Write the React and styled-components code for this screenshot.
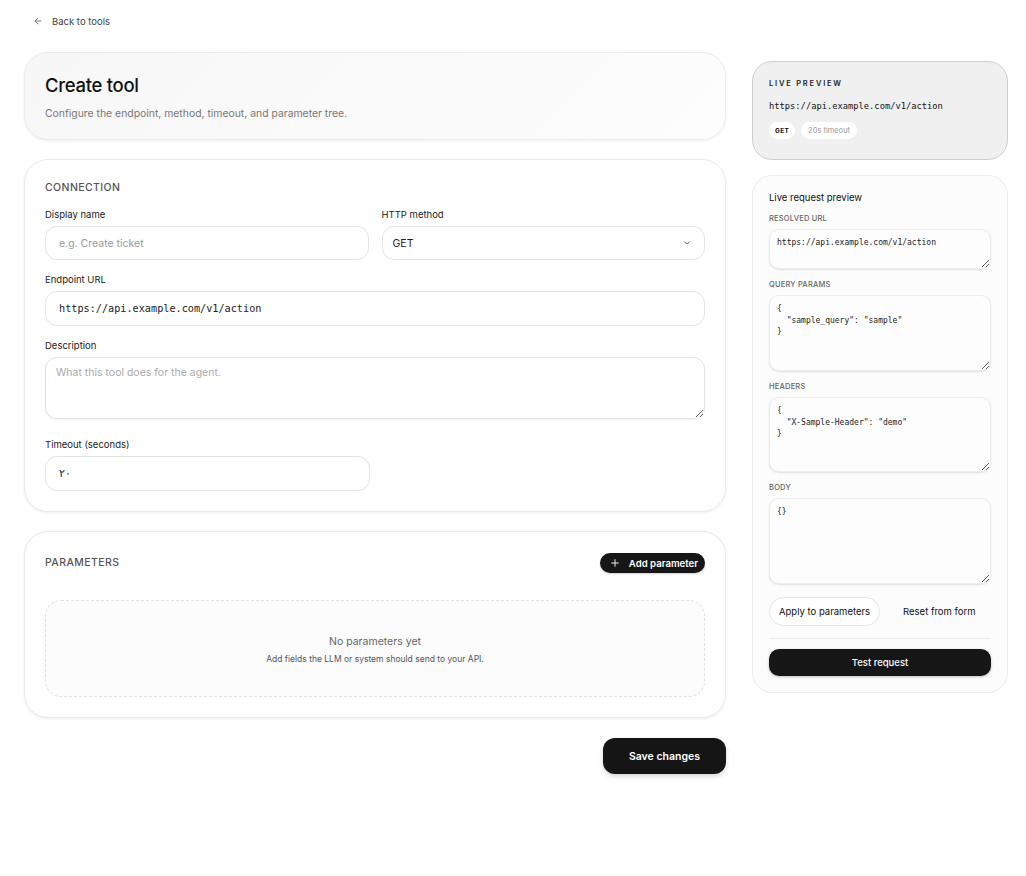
import React from "react";
import styled, { createGlobalStyle } from "styled-components";

const Global = createGlobalStyle`
  html, body { margin: 0; padding: 0; background: #ffffff; }
  body { font-family: Inter, "Noto Sans", "Liberation Sans", sans-serif; color: #111; }
  * { box-sizing: border-box; }
`;

const Page = styled.div`
  padding: 10px 18px 40px 24px;
  width: 1026px;
`;

const BackLink = styled.a`
  display: inline-flex;
  align-items: center;
  gap: 9px;
  margin-left: 9px;
  font-size: 9.5px;
  color: #444;
  text-decoration: none;
  height: 14px;
`;

const Layout = styled.div`
  display: grid;
  grid-template-columns: 702px 256px;
  column-gap: 26px;
  margin-top: 22px;
  align-items: start;
`;

const MainCol = styled.div`
  display: flex;
  flex-direction: column;
  gap: 19px;
`;

const SideCol = styled.div`
  display: flex;
  flex-direction: column;
  gap: 15px;
  padding-top: 9px;
`;

const Card = styled.section`
  background: #fff;
  border: 1px solid #ebebeb;
  border-radius: 24px;
  box-shadow: 0 1px 3px rgba(0,0,0,0.07);
  padding: ${(p) => p.$pad || "20px"};
`;

const HeaderCard = styled(Card)`
  background: linear-gradient(135deg, #f7f7f7, #fdfdfd);
  padding: 20px 20px 20px 20px;
  height: 88px;
`;

const Title = styled.h1`
  margin: 0;
  font-size: 18.5px;
  font-weight: 500;
  letter-spacing: -0.3px;
  color: #111;
  line-height: 24px;
`;

const Subtitle = styled.p`
  margin: 10px 0 0;
  font-size: 10.4px;
  color: #777;
`;

const SectionTitle = styled.h2`
  margin: 0;
  font-size: 10.5px;
  font-weight: 500;
  letter-spacing: 0.4px;
  color: #555;
  text-transform: uppercase;
  line-height: 14px;
`;

const FormGrid = styled.div`
  display: grid;
  grid-template-columns: 1fr 1fr;
  column-gap: 13px;
  row-gap: 14px;
  margin-top: 14px;
`;

const Field = styled.div`
  display: flex;
  flex-direction: column;
  gap: 5px;
  grid-column: ${(p) => (p.$full ? "1 / -1" : "auto")};
  margin-top: ${(p) => p.$mt || "0"};
`;

const Label = styled.label`
  font-size: 9.5px;
  color: #222;
  line-height: 12px;
`;

const Input = styled.input`
  height: ${(p) => p.$h || "34px"};
  border: 1px solid #e4e4e4;
  border-radius: 12px;
  padding: 0 13px;
  font-family: ${(p) => (p.$mono ? '"DejaVu Sans Mono", monospace' : "inherit")};
  font-size: ${(p) => (p.$mono ? "10.2px" : "10.5px")};
  color: #222;
  background: #fff;
  outline: none;
  &::placeholder { color: #999; }
`;

const SelectBox = styled.div`
  height: 34px;
  border: 1px solid #e4e4e4;
  border-radius: 12px;
  padding: 0 12px 0 10px;
  display: flex;
  align-items: center;
  justify-content: space-between;
  font-size: 10.5px;
  color: #222;
`;

const TextArea = styled.textarea`
  height: 62px;
  border: 1px solid #e4e4e4;
  border-radius: 12px;
  padding: 8px 10px;
  font-family: inherit;
  font-size: 10.5px;
  color: #222;
  resize: vertical;
  outline: none;
  box-shadow: 0 1px 2px rgba(0,0,0,0.06);
  &::placeholder { color: #aaa; }
`;

const Half = styled.div`
  width: 325px;
  display: flex;
  flex-direction: column;
`;

const ParamHeader = styled.div`
  display: flex;
  align-items: center;
  justify-content: space-between;
  height: 20px;
`;

const PillButton = styled.button`
  display: inline-flex;
  align-items: center;
  gap: 9px;
  height: 20px;
  padding: 0 7px 0 10px;
  background: #161616;
  color: #fff;
  border: none;
  border-radius: 999px;
  font-family: inherit;
  font-size: 9.6px;
  font-weight: 600;
  box-shadow: 0 1px 2px rgba(0,0,0,0.2);
`;

const EmptyBox = styled.div`
  margin-top: 27px;
  height: 97px;
  border: 1px dashed #e2e2e2;
  border-radius: 16px;
  background: #fcfcfc;
  display: flex;
  flex-direction: column;
  align-items: center;
  justify-content: center;
  gap: 6px;
  padding-top: 2px;
`;

const EmptyTitle = styled.div`
  font-size: 10.5px;
  color: #666;
`;

const EmptyText = styled.div`
  font-size: 8.5px;
  color: #555;
`;

const Footer = styled.div`
  display: flex;
  justify-content: flex-end;
  margin-top: 1px;
`;

const SaveButton = styled.button`
  height: 36px;
  padding: 0 26px;
  background: #151515;
  color: #fff;
  border: none;
  border-radius: 12px;
  font-family: inherit;
  font-size: 10.5px;
  font-weight: 600;
  box-shadow: 0 2px 5px rgba(0,0,0,0.18);
`;

const PreviewCard = styled.section`
  background: #f0f0f0;
  border: 1px solid #cfcfcf;
  border-radius: 20px;
  padding: 17px 16px 16px;
  height: 99px;
`;

const Eyebrow = styled.div`
  font-size: 7.5px;
  font-weight: 600;
  letter-spacing: 1.8px;
  color: #222;
  text-transform: uppercase;
  line-height: 10px;
`;

const MonoLine = styled.div`
  margin-top: 11px;
  font-family: "DejaVu Sans Mono", monospace;
  font-size: 8.75px;
  color: #111;
  line-height: 12px;
`;

const BadgeRow = styled.div`
  display: flex;
  gap: 6px;
  margin-top: 10px;
`;

const Badge = styled.span`
  display: inline-flex;
  align-items: center;
  height: 17px;
  padding: 0 ${(p) => (p.$strong ? "6px" : "7px")};
  background: #fff;
  border-radius: 999px;
  font-size: ${(p) => (p.$strong ? "6.5px" : "7.5px")};
  font-weight: ${(p) => (p.$strong ? 700 : 400)};
  color: ${(p) => (p.$strong ? "#111" : "#999")};
  letter-spacing: ${(p) => (p.$strong ? "0.3px" : "0")};
`;

const RequestCard = styled.section`
  background: #fcfcfc;
  border: 1px solid #ececec;
  border-radius: 20px;
  padding: 16px 16px 16px;
  display: flex;
  flex-direction: column;
`;

const CardHeading = styled.div`
  font-size: 9.5px;
  color: #111;
  line-height: 12px;
`;

const Block = styled.div`
  display: flex;
  flex-direction: column;
  gap: 5px;
  margin-top: ${(p) => p.$mt || "8px"};
`;

const SmallLabel = styled.div`
  font-size: 7.5px;
  font-weight: 500;
  color: #666;
  text-transform: uppercase;
  letter-spacing: 0.2px;
  line-height: 10px;
`;

const CodeArea = styled.textarea`
  height: ${(p) => p.$h};
  border: 1px solid #eeeeee;
  border-radius: 10px;
  background: #fdfdfd;
  padding: 7px 7px;
  font-family: "DejaVu Sans Mono", monospace;
  font-size: 8px;
  line-height: 11.5px;
  color: #222;
  resize: vertical;
  outline: none;
  box-shadow: 0 1px 2px rgba(0,0,0,0.12);
`;

const ActionRow = styled.div`
  display: flex;
  align-items: center;
  margin-top: 13px;
  padding-bottom: 12px;
  border-bottom: 1px solid #e8e8e8;
`;

const GhostButton = styled.button`
  height: 29px;
  padding: 0 ${(p) => (p.$bare ? "22px" : "9px")};
  border: 1px solid ${(p) => (p.$bare ? "transparent" : "#e6e6e6")};
  background: ${(p) => (p.$bare ? "transparent" : "#fff")};
  border-radius: 999px;
  font-family: inherit;
  font-size: 9.5px;
  color: #111;
  white-space: nowrap;
`;

const DarkButton = styled.button`
  margin-top: 10px;
  height: 27px;
  width: 100%;
  background: #161616;
  color: #fff;
  border: none;
  border-radius: 10px;
  font-family: inherit;
  font-size: 9.5px;
  font-weight: 500;
  box-shadow: 0 1px 3px rgba(0,0,0,0.25);
`;

const ArrowLeft = () => (
  <svg width="10" height="10" viewBox="0 0 24 24" fill="none" stroke="#555" strokeWidth="1.8" strokeLinecap="round" strokeLinejoin="round">
    <path d="M19 12H5" />
    <path d="M12 19l-7-7 7-7" />
  </svg>
);

const Chevron = () => (
  <svg width="10" height="10" viewBox="0 0 24 24" fill="none" stroke="#444" strokeWidth="2" strokeLinecap="round" strokeLinejoin="round">
    <path d="M6 9l6 6 6-6" />
  </svg>
);

const Plus = () => (
  <svg width="10" height="10" viewBox="0 0 24 24" fill="none" stroke="#fff" strokeWidth="2.2" strokeLinecap="round">
    <path d="M12 4v16M4 12h16" />
  </svg>
);

export default function App() {
  return (
    <Page>
      <Global />
      <BackLink href="#">
        <ArrowLeft />
        Back to tools
      </BackLink>
      <Layout>
        <MainCol>
          <HeaderCard>
            <Title>Create tool</Title>
            <Subtitle>Configure the endpoint, method, timeout, and parameter tree.</Subtitle>
          </HeaderCard>

          <Card $pad="21px 20px 20px">
            <SectionTitle>Connection</SectionTitle>
            <FormGrid>
              <Field>
                <Label>Display name</Label>
                <Input placeholder="e.g. Create ticket" />
              </Field>
              <Field>
                <Label>HTTP method</Label>
                <SelectBox>
                  <span>GET</span>
                  <Chevron />
                </SelectBox>
              </Field>
              <Field $full>
                <Label>Endpoint URL</Label>
                <Input $mono $h="35px" defaultValue="https://api.example.com/v1/action" />
              </Field>
              <Field $full>
                <Label>Description</Label>
                <TextArea placeholder="What this tool does for the agent." />
              </Field>
              <Field $full $mt="6px">
                <Label>Timeout (seconds)</Label>
                <Half>
                  <Input $h="35px" defaultValue="٢٠" />
                </Half>
              </Field>
            </FormGrid>
          </Card>

          <Card $pad="21px 20px 20px">
            <ParamHeader>
              <SectionTitle>Parameters</SectionTitle>
              <PillButton>
                <Plus />
                Add parameter
              </PillButton>
            </ParamHeader>
            <EmptyBox>
              <EmptyTitle>No parameters yet</EmptyTitle>
              <EmptyText>Add fields the LLM or system should send to your API.</EmptyText>
            </EmptyBox>
          </Card>

          <Footer>
            <SaveButton>Save changes</SaveButton>
          </Footer>
        </MainCol>

        <SideCol>
          <PreviewCard>
            <Eyebrow>Live preview</Eyebrow>
            <MonoLine>https://api.example.com/v1/action</MonoLine>
            <BadgeRow>
              <Badge $strong>GET</Badge>
              <Badge>20s timeout</Badge>
            </BadgeRow>
          </PreviewCard>

          <RequestCard>
            <CardHeading>Live request preview</CardHeading>
            <Block $mt="10px">
              <SmallLabel>Resolved URL</SmallLabel>
              <CodeArea $h="40px" defaultValue="https://api.example.com/v1/action" />
            </Block>
            <Block $mt="11px">
              <SmallLabel>Query params</SmallLabel>
              <CodeArea $h="76px" defaultValue={'{\n  "sample_query": "sample"\n}'} />
            </Block>
            <Block $mt="11px">
              <SmallLabel>Headers</SmallLabel>
              <CodeArea $h="75px" defaultValue={'{\n  "X-Sample-Header": "demo"\n}'} />
            </Block>
            <Block $mt="11px">
              <SmallLabel>Body</SmallLabel>
              <CodeArea $h="86px" defaultValue="{}" />
            </Block>
            <ActionRow>
              <GhostButton>Apply to parameters</GhostButton>
              <GhostButton $bare>Reset from form</GhostButton>
            </ActionRow>
            <DarkButton>Test request</DarkButton>
          </RequestCard>
        </SideCol>
      </Layout>
    </Page>
  );
}
